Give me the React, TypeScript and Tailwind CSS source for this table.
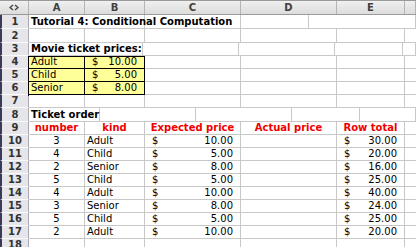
import React from "react";

type Cell = {
  text?: string;
  money?: string;
  align?: "left" | "center" | "right";
  bold?: boolean;
  red?: boolean;
  yellow?: boolean;
  span?: number;
};

// column widths include the 1px right gridline
const colW = ["w-[56px]", "w-[60px]", "w-[96px]", "w-[96px]", "w-[68px]", "w-[12px]"];
const spanW: Record<string, string> = {
  "0-2": "w-[116px]",
  "0-3": "w-[212px]",
};

const rowH = [
  "h-[14px]", "h-[14px]", "h-[13px]", "h-[13px]", "h-[13px]", "h-[13px]",
  "h-[13px]", "h-[14px]", "h-[13px]", "h-[13px]", "h-[13px]", "h-[13px]",
  "h-[13px]", "h-[13px]", "h-[13px]", "h-[13px]", "h-[13px]", "h-[13px]",
];

const order: [string, string, string, string][] = [
  ["3", "Adult", "10.00", "30.00"],
  ["4", "Child", "5.00", "20.00"],
  ["2", "Senior", "8.00", "16.00"],
  ["5", "Child", "5.00", "25.00"],
  ["4", "Adult", "10.00", "40.00"],
  ["3", "Senior", "8.00", "24.00"],
  ["5", "Child", "5.00", "25.00"],
  ["2", "Adult", "10.00", "20.00"],
];

const rows: Cell[][] = [
  [{ text: "Tutorial 4: Conditional Computation", bold: true, span: 3 }],
  [],
  [{ text: "Movie ticket prices:", bold: true, span: 2 }],
  [{ text: "Adult", yellow: true }, { money: "10.00", yellow: true }],
  [{ text: "Child", yellow: true }, { money: "5.00", yellow: true }],
  [{ text: "Senior", yellow: true }, { money: "8.00", yellow: true }],
  [],
  [{ text: "Ticket order", bold: true, span: 2 }],
  [
    { text: "number", bold: true, red: true, align: "center" },
    { text: "kind", bold: true, red: true, align: "center" },
    { text: "Expected price", bold: true, red: true, align: "center" },
    { text: "Actual price", bold: true, red: true, align: "center" },
    { text: "Row total", bold: true, red: true, align: "center" },
  ],
  ...order.map(([n, kind, price, total]) => [
    { text: n, align: "center" as const },
    { text: kind },
    { money: price },
    {},
    { money: total },
  ]),
  [],
];

function CellBox({ cell, width, last }: { cell: Cell; width: string; last?: boolean }) {
  const border = cell.yellow
    ? "border-r border-b border-black bg-[#ffff99]"
    : "border-r border-b border-[#c8c8c8]";
  const color = cell.red ? "text-[#f00000]" : "text-black";
  const weight = cell.bold ? "font-bold" : "font-normal";
  if (cell.money) {
    return (
      <div className={`${width} ${border} h-full shrink-0 flex items-center justify-between pl-[7px] pr-[7px] ${color}`}>
        <span>$</span>
        <span>{cell.money}</span>
      </div>
    );
  }
  const justify =
    cell.align === "center" ? "justify-center" : cell.align === "right" ? "justify-end pr-[3px]" : "justify-start pl-[2px]";
  return (
    <div
      className={`${width} ${border} ${last ? "grow" : "shrink-0"} h-full flex items-center ${justify} ${color} ${weight} whitespace-nowrap overflow-visible`}
    >
      {cell.text}
    </div>
  );
}

function Row({ index, cells }: { index: number; cells: Cell[] }) {
  const out: React.ReactNode[] = [];
  let col = 0;
  let i = 0;
  while (col < colW.length) {
    const cell = cells[i] ?? {};
    i++;
    const span = cell.span ?? 1;
    const width = span > 1 ? spanW[`0-${span - 1}`] : colW[col];
    out.push(<CellBox key={col} cell={cell} width={width} last={col === colW.length - 1} />);
    col += span;
  }
  // the yellow block needs a black line on its top and left edges
  const yellowRow = cells[0]?.yellow;
  return (
    <div className={`flex ${rowH[index]} ${index === 3 ? "relative" : ""}`}>
      <div className="w-[29px] shrink-0 h-full flex items-center justify-center bg-[#e6e6ea] border-l-[2px] border-l-[#3a3a58] border-r border-r-[#a8a8b4] border-b border-b-[#fafafa] text-[#333] font-bold">
        {index + 1}
      </div>
      <div className={`flex h-full grow ${yellowRow ? "" : ""}`}>{out}</div>
    </div>
  );
}

export default function App() {
  return (
    <div className="w-[416px] h-[247px] overflow-hidden bg-white text-[10px] leading-[12px] font-['DejaVu_Sans',Verdana,sans-serif]">
      {/* column letters */}
      <div className="flex h-[15px] border-t border-t-[#9a9a9a] bg-gradient-to-b from-[#f0f0f0] to-[#dcdcdc] border-b border-b-[#9a9a9a]">
        <div className="w-[29px] shrink-0 flex items-center justify-center border-r border-r-[#b4b4b4]">
          <svg width="10" height="7" viewBox="0 0 10 7">
            <path d="M4 1 L1 3.5 L4 6 M6 1 L9 3.5 L6 6" fill="none" stroke="#444" strokeWidth="1.4" />
          </svg>
        </div>
        {["A", "B", "C", "D", "E", ""].map((l, k) => (
          <div
            key={k}
            className={`${colW[k]} ${k === 5 ? "grow" : "shrink-0"} flex items-center justify-center border-r border-r-[#b4b4b4] text-[#404040] font-bold`}
          >
            {l}
          </div>
        ))}
      </div>
      <div className="relative">
        {rows.map((cells, r) => (
          <Row key={r} index={r} cells={cells} />
        ))}
        {/* outline of the price table */}
        <div className="absolute left-[28px] top-[41px] w-[117px] h-[40px] border-l border-t border-black pointer-events-none" />
      </div>
    </div>
  );
}
